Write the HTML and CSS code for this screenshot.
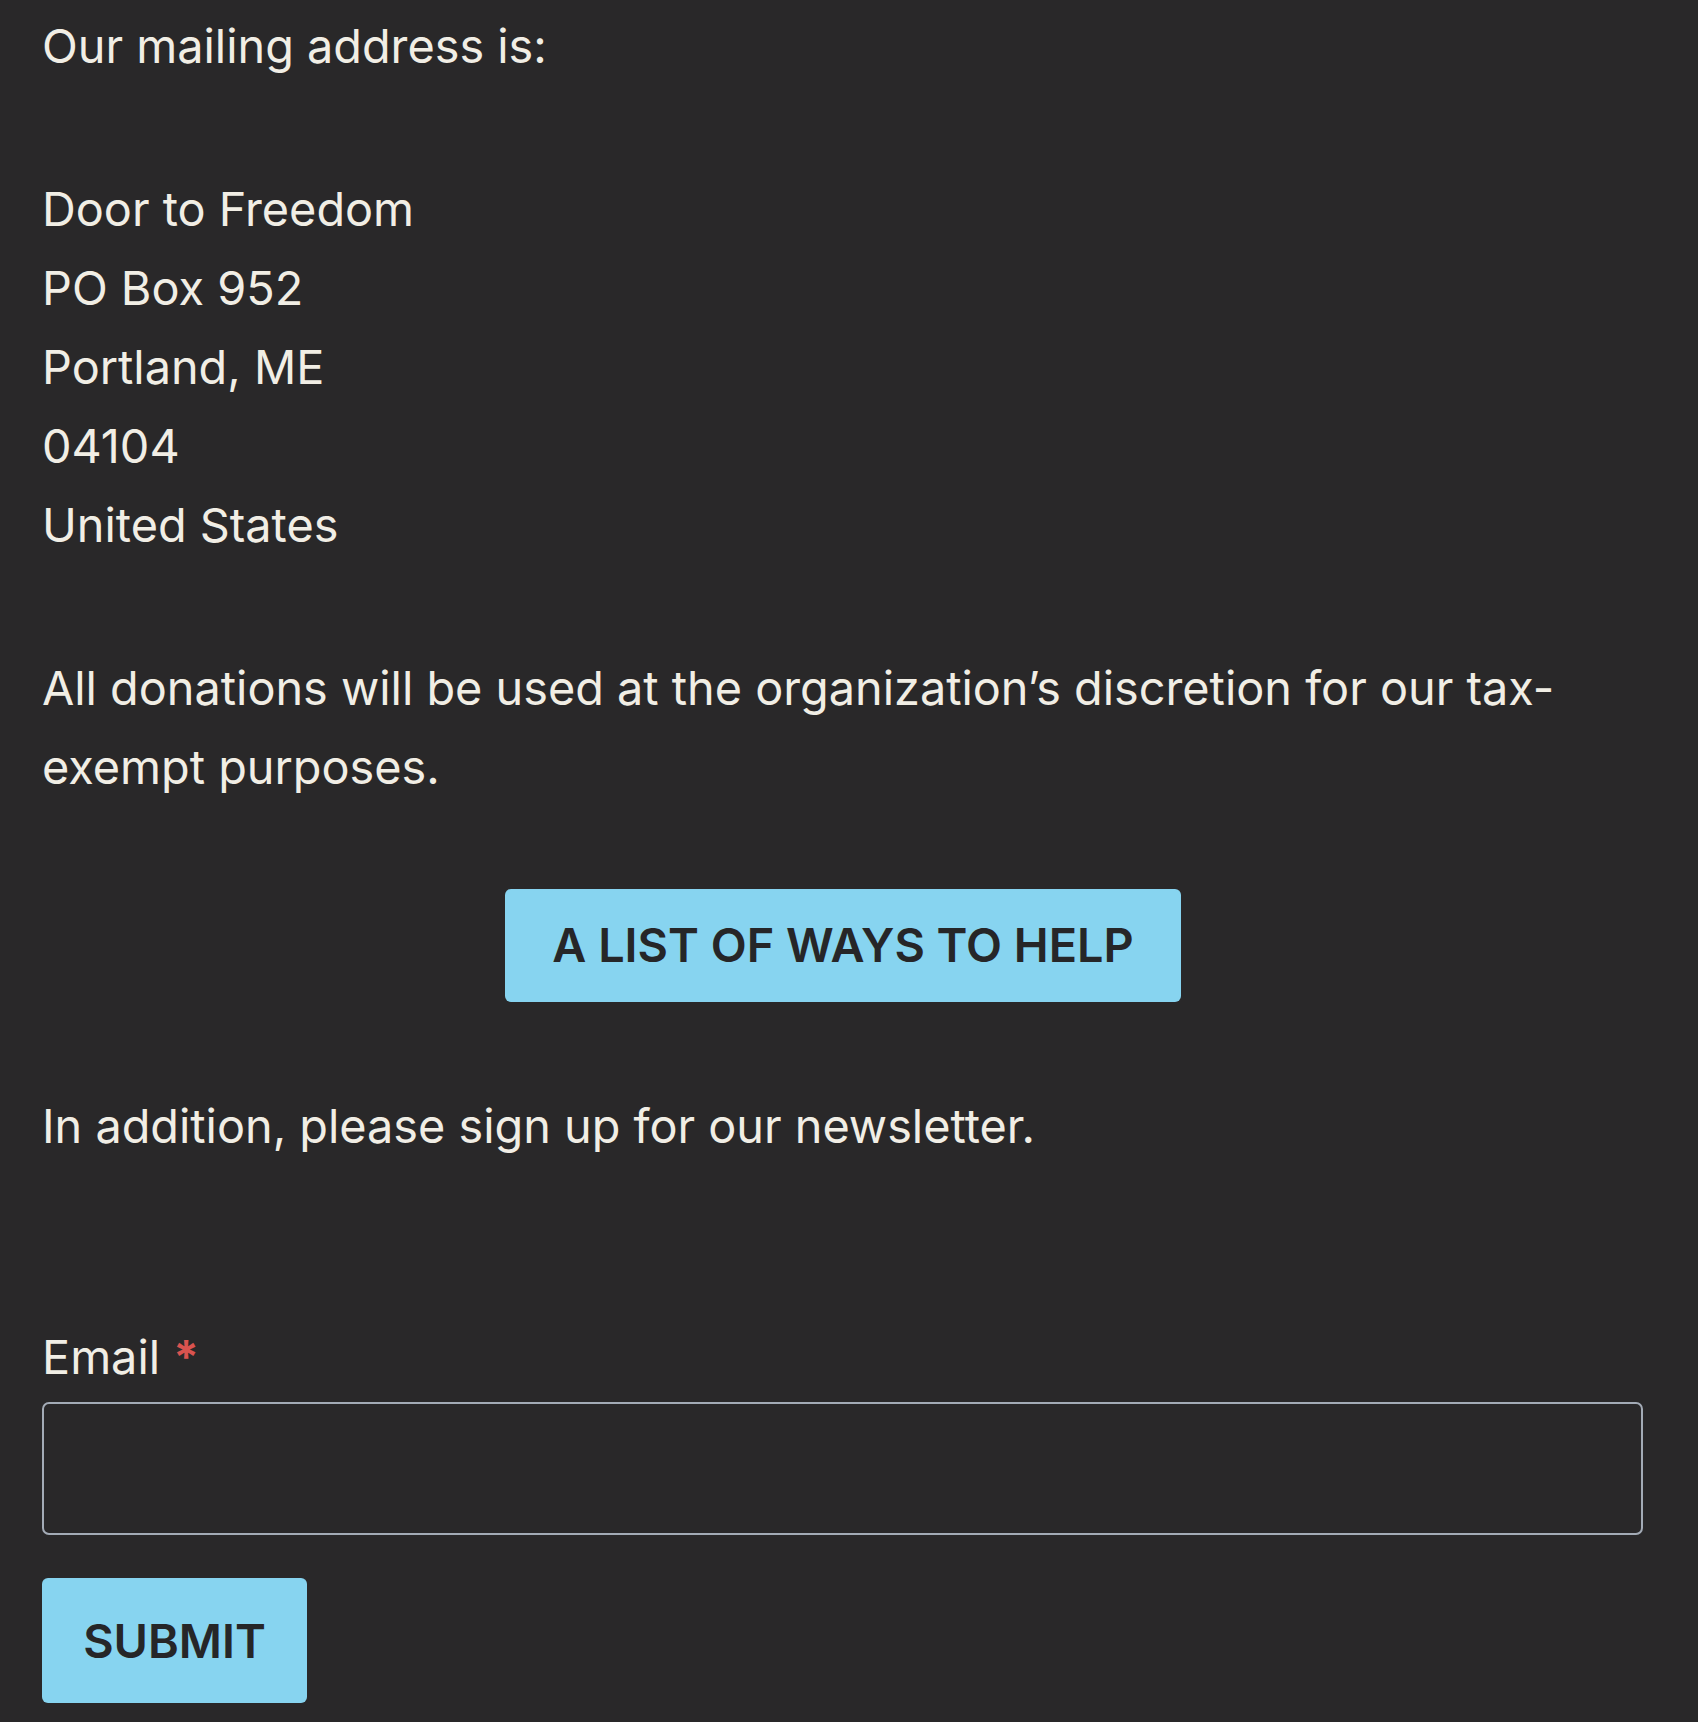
FILE: index.html
```html
<!DOCTYPE html>
<html lang="en">
<head>
<meta charset="utf-8">
<title>Donate</title>
<link rel="stylesheet" href="styles.css">
</head>
<body>
<main class="content">
  <p class="para">Our mailing address is:</p>
  <p class="para">Door to Freedom<br>PO Box 952<br>Portland, ME<br>04104<br>United States</p>
  <p class="para">All donations will be used at the organization’s discretion for our tax-exempt purposes.</p>
  <div class="btn-row">
    <a class="btn btn-help" href="#">A LIST OF WAYS TO HELP</a>
  </div>
  <p class="para para-last">In addition, please sign up for our newsletter.</p>
  <form class="signup">
    <label class="label" for="email">Email <span class="req">*</span></label>
    <input class="input" id="email" type="email">
    <button class="btn btn-submit" type="button">SUBMIT</button>
  </form>
</main>
</body>
</html>
```

FILE: styles.css
```css
html, body {
  margin: 0;
  padding: 0;
  background: #292829;
}
body {
  font-family: Inter, "Noto Sans", sans-serif;
  color: #f1eee5;
  font-size: 46.8px;
  line-height: 79px;
}
.content {
  width: 1600px;
  padding: 7px 0 0 42px;
}
.para {
  margin: 0 0 84px;
}
.btn-row {
  display: flex;
  justify-content: center;
  margin: -2px 0 85px;
  padding-left: 2px;
}
.btn {
  display: inline-flex;
  align-items: center;
  justify-content: center;
  background: #87d4f0;
  color: #262628;
  font-family: Inter, "Noto Sans", sans-serif;
  font-weight: 600;
  font-size: 46.8px;
  text-decoration: none;
  border: none;
  border-radius: 6px;
}
.btn-help {
  width: 676px;
  height: 113px;
}
.para-last {
  margin-bottom: 152px;
}
.signup {
  display: flex;
  flex-direction: column;
  align-items: flex-start;
}
.label {
  display: block;
  line-height: 79px;
}
.req {
  color: #d9534f;
  font-size: 46px;
  font-weight: 700;
}
.input {
  box-sizing: border-box;
  width: 1601px;
  height: 133px;
  margin-top: 5px;
  background: transparent;
  border: 2px solid #a3abb6;
  border-radius: 7px;
}
.btn-submit {
  width: 265px;
  height: 125px;
  margin-top: 43px;
}
```
